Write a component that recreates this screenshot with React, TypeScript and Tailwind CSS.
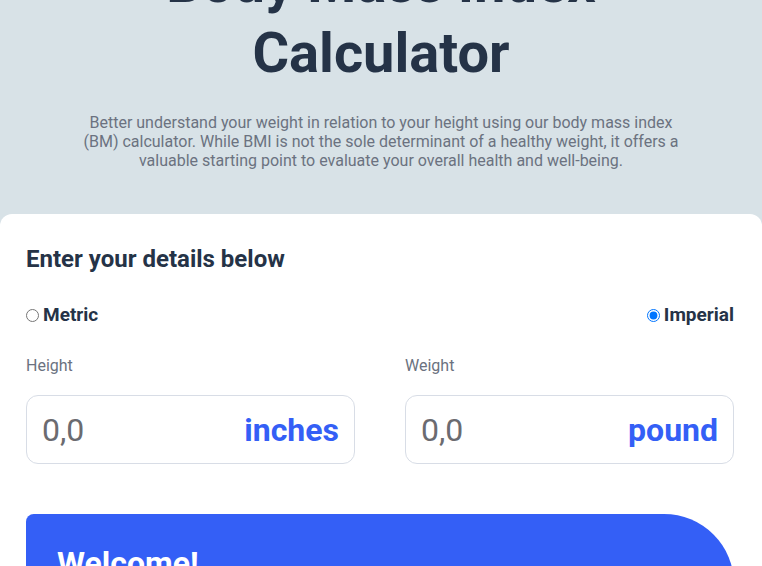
export default function App() {
  return (
    <div className="min-h-screen bg-[#d8e2e7] font-['Roboto',sans-serif]">
      <header className="flex flex-col items-center px-6 pb-[44px] text-center">
        <h1 className="mt-[-52px] text-[56px] leading-[70px] font-bold text-[#253347]">
          Body Mass Index
          <br />
          Calculator
        </h1>
        <p className="mt-[25px] max-w-[600px] text-[16px] leading-[19px] text-[#6b7280]">
          Better understand your weight in relation to your height using our body mass index (BM)
          calculator. While BMI is not the sole determinant of a healthy weight, it offers a
          valuable starting point to evaluate your overall health and well-being.
        </p>
      </header>

      <section className="rounded-t-xl bg-white pt-[30px] pr-[28px] pb-10 pl-[26px]">
        <h2 className="text-[24px] leading-[30px] font-bold text-[#253347]">
          Enter your details below
        </h2>

        <div className="mt-[27px] flex h-[28px] items-center justify-between">
          <label className="flex items-center gap-1 text-[19px] font-bold text-[#253347]">
            <input type="radio" name="unit" className="h-[13px] w-[13px]" />
            Metric
          </label>
          <label className="flex items-center gap-1 text-[19px] font-bold text-[#253347]">
            <input type="radio" name="unit" defaultChecked className="h-[13px] w-[13px]" />
            Imperial
          </label>
        </div>

        <div className="mt-[27px] grid grid-cols-2 gap-[50px]">
          {[
            { label: 'Height', unit: 'inches' },
            { label: 'Weight', unit: 'pound' },
          ].map((f) => (
            <div key={f.label} className="flex flex-col">
              <span className="text-[16px] leading-[20px] text-[#6b7280]">{f.label}</span>
              <div className="mt-[19px] flex h-[69px] items-center justify-between rounded-xl border border-[#d8dde6] pr-[15px] pl-[15px]">
                <span className="text-[32px] text-[#6b6b70]">0,0</span>
                <span className="text-[32px] font-bold text-[#345ff6]">{f.unit}</span>
              </div>
            </div>
          ))}
        </div>

        <div className="mt-[50px] rounded-l-lg rounded-r-[72px] bg-[#345ff6] px-[31px] pt-[30px] pb-8 text-white">
          <h3 className="text-[32px] leading-[38px] font-bold">Welcome!</h3>
          <p className="mt-4 text-[16px] leading-6">
            Enter your height and weight and you'll see your BMI result here
          </p>
        </div>
      </section>
    </div>
  )
}
